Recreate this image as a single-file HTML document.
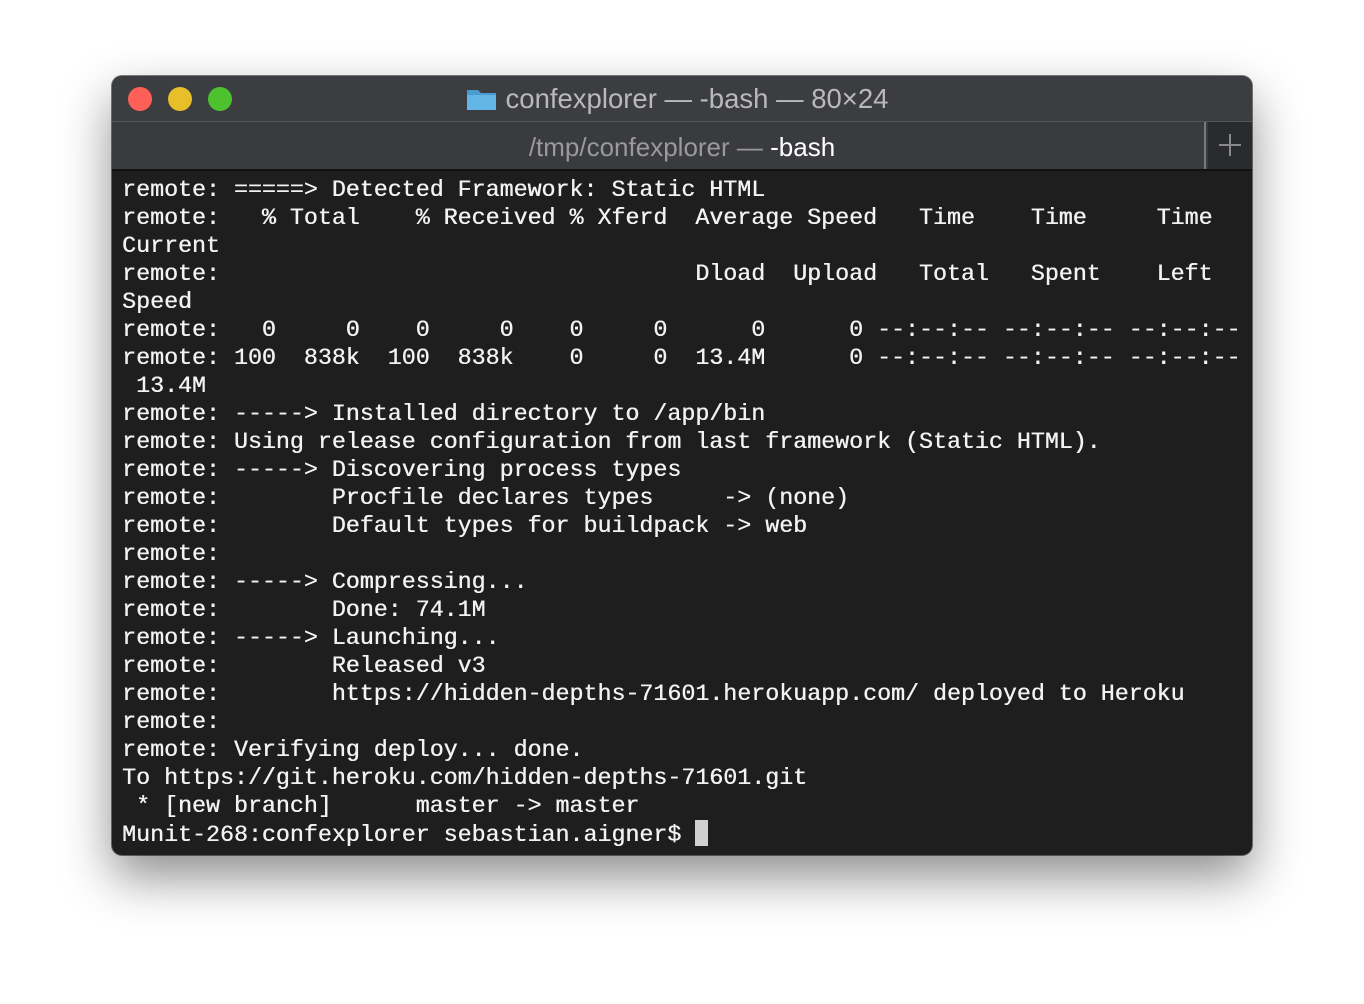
<!DOCTYPE html>
<html><head><meta charset="utf-8"><style>
html,body{margin:0;padding:0;background:#fff;width:1364px;height:1004px;overflow:hidden}
.win{position:absolute;left:112px;top:76px;width:1140px;height:779px;border-radius:10px;overflow:hidden;background:#1e1e1e;box-shadow:0 22px 50px rgba(0,0,0,.45),0 0 0 1px rgba(0,0,0,.5)}
.title{position:absolute;left:0;top:0;width:1140px;height:45px;background:#3c3d40;border-bottom:1px solid #55565a}
.dot{position:absolute;top:11px;width:24px;height:24px;border-radius:50%}
.ttext{position:absolute;left:0;right:0;top:7px;text-align:center;font:27.5px "Liberation Sans",sans-serif;color:#b9b9bb;padding-right:10px}
.tabs{position:absolute;left:0;top:46px;width:1140px;height:47px;background:#3a3b3f;border-bottom:2px solid #111}
.tab{position:absolute;left:0;top:0;width:1094px;height:47px;border-right:2px solid #7a7a7c;text-align:center;font:26px "Liberation Sans",sans-serif;color:#9a9a9c;line-height:50px;padding-left:48px;box-sizing:border-box}
.tab b{color:#fff;font-weight:normal}
.plus{position:absolute;left:1096px;top:0;width:44px;height:47px;background:#2a2b2d}
.term{position:absolute;left:10px;top:100px;margin:0;font:23.3px/28px "Liberation Mono",monospace;color:#f2f2f2;white-space:pre;text-shadow:0.4px 0 0 #f2f2f2}
.cur{display:inline-block;width:13px;height:26px;background:#d0d0d0;vertical-align:-5px}
</style></head><body>
<div class="win">
<div class="title">
<div class="dot" style="left:16px;background:#fe5f57"></div>
<div class="dot" style="left:56px;background:#e6bf2a"></div>
<div class="dot" style="left:96px;background:#4ec22e"></div>
<div class="ttext"><svg width="31" height="24" viewBox="0 0 31 24" style="vertical-align:-3px;margin-right:9px"><path d="M1 3h11l3 3h15v17H1z" fill="#4a9cd0"/><rect x="1" y="8" width="29" height="15" fill="#62b5e5"/></svg>confexplorer — -bash — 80×24</div>
</div>
<div class="tabs">
<div class="tab">/tmp/confexplorer — <b>-bash</b></div>
<div class="plus"><svg width="44" height="47"><path d="M22 12v22M11 23h22" stroke="#8a8a8c" stroke-width="2"/></svg></div>
</div>
<pre class="term">remote: =====&gt; Detected Framework: Static HTML
remote:   % Total    % Received % Xferd  Average Speed   Time    Time     Time
Current
remote:                                  Dload  Upload   Total   Spent    Left
Speed
remote:   0     0    0     0    0     0      0      0 --:--:-- --:--:-- --:--:--
remote: 100  838k  100  838k    0     0  13.4M      0 --:--:-- --:--:-- --:--:--
 13.4M
remote: -----&gt; Installed directory to /app/bin
remote: Using release configuration from last framework (Static HTML).
remote: -----&gt; Discovering process types
remote:        Procfile declares types     -&gt; (none)
remote:        Default types for buildpack -&gt; web
remote:
remote: -----&gt; Compressing...
remote:        Done: 74.1M
remote: -----&gt; Launching...
remote:        Released v3
remote:        https://hidden-depths-71601.herokuapp.com/ deployed to Heroku
remote:
remote: Verifying deploy... done.
To https://git.heroku.com/hidden-depths-71601.git
 * [new branch]      master -&gt; master
Munit-268:confexplorer sebastian.aigner$ <span class="cur"></span></pre>
</div>
</body></html>
